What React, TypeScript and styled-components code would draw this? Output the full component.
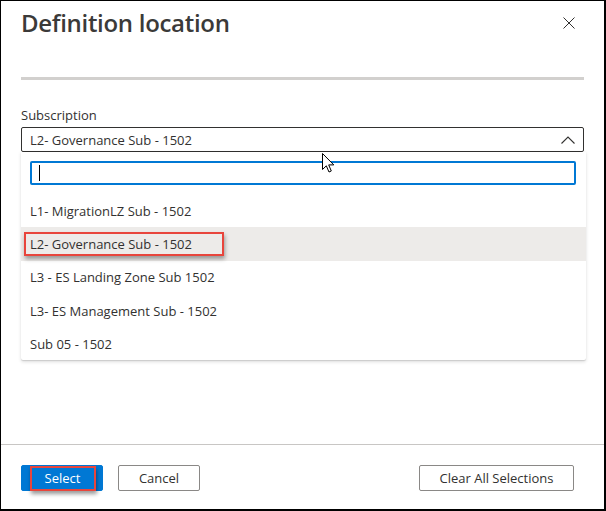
import styled, { createGlobalStyle } from "styled-components";

const GlobalStyle = createGlobalStyle`
  *, *::before, *::after { box-sizing: border-box; }
  body {
    margin: 0;
    font-family: "Open Sans", "Noto Sans", "Liberation Sans", sans-serif;
    color: #323130;
    background: #fff;
  }
`;

const options = [
  "L1- MigrationLZ Sub - 1502",
  "L2- Governance Sub - 1502",
  "L3 - ES Landing Zone Sub 1502",
  "L3- ES Management Sub - 1502",
  "Sub 05 - 1502",
];
const selected = "L2- Governance Sub - 1502";

function App() {
  return (
    <>
      <GlobalStyle />
      <Frame>
        <Header>
          <Title>Definition location</Title>
          <CloseButton aria-label="Close">
            <svg width="12" height="12" viewBox="0 0 12 12">
              <path d="M0.5 0.5 L11.5 11.5 M11.5 0.5 L0.5 11.5" stroke="#323130" strokeWidth="1" fill="none" />
            </svg>
          </CloseButton>
        </Header>
        <Divider />
        <Body>
          <Label>Subscription</Label>
          <ComboWrap>
            <Combo>
              <span>{selected}</span>
              <svg width="14" height="8" viewBox="0 0 14 8">
                <path d="M0.5 7.5 L7 1 L13.5 7.5" stroke="#323130" strokeWidth="1.1" fill="none" />
              </svg>
            </Combo>
            <Panel>
              <SearchBox>
                <Caret />
              </SearchBox>
              <List>
                {options.map((o) => (
                  <Item key={o} $active={o === selected}>
                    {o === selected ? <Marked>{o}</Marked> : o}
                  </Item>
                ))}
              </List>
            </Panel>
          </ComboWrap>
        </Body>
        <Footer>
          <Button $primary>
            <MarkedButton>Select</MarkedButton>
          </Button>
          <Button>Cancel</Button>
          <Spacer />
          <Button $wide>Clear All Selections</Button>
        </Footer>
        <Pointer width="13" height="20" viewBox="0 0 13 20">
          <path d="M0.5 0.5 L0.5 16.5 L4.3 12.8 L7 19 L9.3 18 L6.7 11.9 L11.8 11.9 Z" fill="#fff" stroke="#000" strokeWidth="1" strokeLinejoin="round" />
        </Pointer>
      </Frame>
    </>
  );
}

const Frame = styled.div`
  position: relative;
  width: 606px;
  height: 511px;
  border: 1px solid #000;
  border-right-width: 2px;
  border-bottom-width: 2px;
  display: flex;
  flex-direction: column;
  background: #fff;
  overflow: hidden;
`;

const Header = styled.div`
  display: flex;
  justify-content: space-between;
  align-items: flex-start;
  padding: 6px 29px 0 20px;
`;

const Title = styled.h1`
  margin: 0;
  font-size: 24px;
  line-height: 32px;
  font-weight: 600;
  letter-spacing: -0.3px;
  color: #3b3a39;
`;

const CloseButton = styled.button`
  border: 0;
  background: none;
  padding: 0;
  margin-top: 10px;
  width: 12px;
  height: 12px;
  display: flex;
`;

const Divider = styled.div`
  height: 3px;
  margin: 38px 20px 0 20px;
  background: #d2d0ce;
`;

const Body = styled.div`
  padding: 26px 20px 0 20px;
`;

const Label = styled.div`
  font-size: 13px;
  line-height: 18px;
  margin-bottom: 3px;
`;

const ComboWrap = styled.div`
  position: relative;
`;

const Combo = styled.div`
  height: 25px;
  border: 1px solid #323130;
  border-radius: 2px;
  display: flex;
  align-items: center;
  justify-content: space-between;
  padding: 0 8px 0 8px;
  font-size: 13px;
  span { margin-top: 1px; }
`;

const Panel = styled.div`
  position: absolute;
  top: 100%;
  left: 0;
  right: -2px;
  background: #fff;
  box-shadow: 0 1.6px 3.6px rgba(0, 0, 0, 0.13), 0 0.3px 0.9px rgba(0, 0, 0, 0.11);
  border-radius: 0 0 2px 2px;
  padding-top: 9px;
  padding-bottom: 0;
`;

const SearchBox = styled.div`
  margin: 0 10px 0 9px;
  height: 24px;
  border: 2px solid #0078d4;
  border-radius: 2px;
  position: relative;
`;

const Caret = styled.div`
  position: absolute;
  left: 7px;
  top: 2px;
  width: 1px;
  height: 16px;
  background: #000;
`;

const List = styled.div`
  margin-top: 9px;
`;

const Item = styled.div<{ $active?: boolean }>`
  height: 33.3px;
  display: flex;
  align-items: center;
  padding: 0 9px;
  font-size: 13px;
  background: ${(p) => (p.$active ? "#edebe9" : "transparent")};
`;

const Marked = styled.span`
  margin-left: -6px;
  padding: 1px 30px 1px 4px;
  border: 2px solid #e8453c;
  box-shadow: 1px 3px 4px rgba(0, 0, 0, 0.35);
`;

const Footer = styled.div`
  margin-top: auto;
  height: 65px;
  border-top: 1px solid #c8c6c4;
  display: flex;
  align-items: flex-start;
  padding: 20px 30px 0 20px;
  gap: 15px;
`;

const Spacer = styled.div`
  flex: 1;
`;

const Button = styled.button<{ $primary?: boolean; $wide?: boolean }>`
  height: 26px;
  width: ${(p) => (p.$wide ? "155px" : "82px")};
  border-radius: 2px;
  font-family: inherit;
  font-size: 13px;
  color: ${(p) => (p.$primary ? "#fff" : "#323130")};
  background: ${(p) => (p.$primary ? "#0078d4" : "#fff")};
  border: 1px solid ${(p) => (p.$primary ? "#0078d4" : "#8a8886")};
  display: flex;
  align-items: center;
  justify-content: center;
  padding: 0;
`;

const MarkedButton = styled.span`
  width: 66px;
  height: 25px;
  margin-left: 1px;
  display: flex;
  align-items: center;
  justify-content: center;
  border: 2px solid #e8453c;
  box-shadow: 1px 3px 4px rgba(0, 0, 0, 0.4);
`;

const Pointer = styled.svg`
  position: absolute;
  left: 321px;
  top: 152px;
`;

export default App;
